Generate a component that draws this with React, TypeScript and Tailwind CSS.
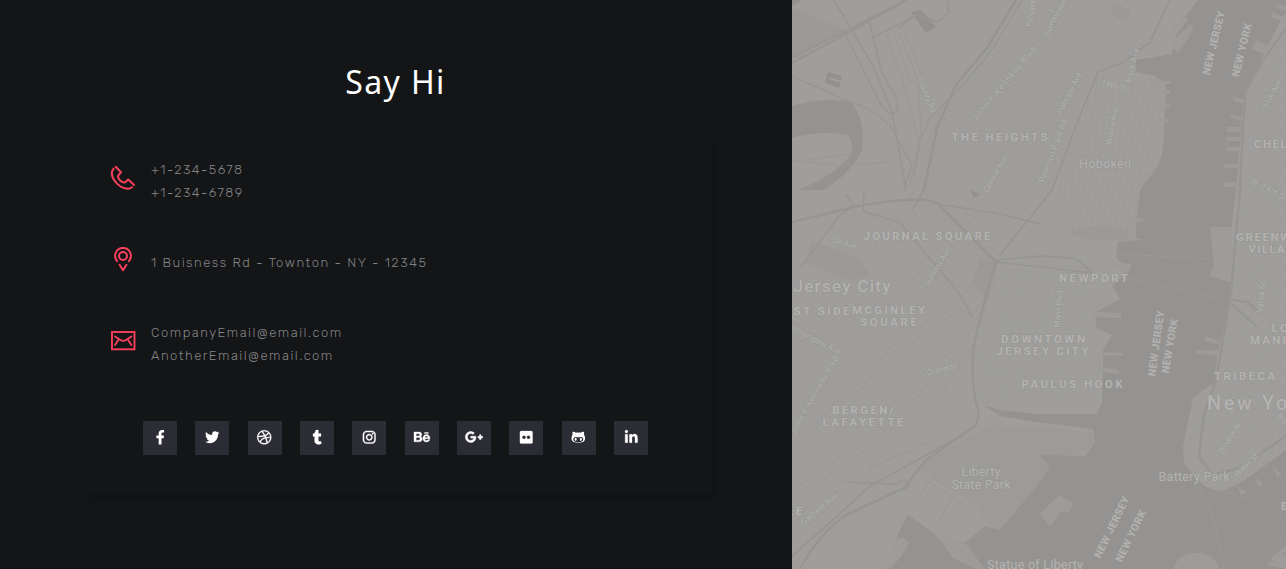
import type { ReactNode } from "react";
import {
  FaBehance,
  FaDribbble,
  FaFacebookF,
  FaFlickr,
  FaGithubAlt,
  FaGooglePlusG,
  FaInstagram,
  FaLinkedinIn,
  FaTumblr,
  FaTwitter,
} from "react-icons/fa";

function PhoneIcon() {
  return (
    <svg width="26" height="26" viewBox="0 0 26 26" fill="none" stroke="#f9405c" strokeWidth="2" strokeLinecap="round" strokeLinejoin="round">
      <path d="M5.8 1.8 L11 7.3 L8.4 10.3 C7.2 12.8 8.7 14 10.2 15.5 C12 17.2 13.4 18.3 15.5 17.1 L18.2 14.6 L24.1 20" />
      <path d="M3.6 3.6 C1.2 6.5 1.6 10.9 3.8 14.6 C7.2 20.4 13.5 24.2 18.6 23.7 C20.3 23.5 21.3 23 22.2 22.3" />
    </svg>
  );
}

function PinIcon() {
  return (
    <svg width="26" height="26" viewBox="0 0 26 26" fill="none" stroke="#f9405c" strokeWidth="2" strokeLinecap="round" strokeLinejoin="round">
      <circle cx="13" cy="10" r="4" />
      <path d="M7.1 15.2 C2.7 9.7 6 2 13 2 C20 2 23.3 9.7 18.9 15.2" />
      <path d="M9.6 18.8 L13 24.2 L16.4 18.8" />
    </svg>
  );
}

function MailIcon() {
  return (
    <svg width="26" height="26" viewBox="0 0 26 26" fill="none" stroke="#f9405c" strokeWidth="1.9" strokeLinecap="round">
      <rect x="2" y="5" width="22.5" height="17.3" />
      <path d="M5 9.5 L10.4 13 C12.3 14.2 14.2 14.2 16 13 L21.4 9.5" />
      <path d="M8.3 13 L5 18 M18.1 13 L21.4 18" />
    </svg>
  );
}

function ContactRow({ icon, children, className }: { icon: ReactNode; children: ReactNode; className: string }) {
  return (
    <div className={`flex gap-[15px] ${className}`}>
      <div className="shrink-0">{icon}</div>
      <div className="whitespace-nowrap font-['Rubik','Inter',sans-serif] text-[13px] font-light leading-[23px] text-[#838485]">
        {children}
      </div>
    </div>
  );
}

const socials = [
  { name: "Facebook", Icon: FaFacebookF, size: 14.5, bold: 0 },
  { name: "Twitter", Icon: FaTwitter, size: 14.5, bold: 0 },
  { name: "Dribbble", Icon: FaDribbble, size: 14.5, bold: 12 },
  { name: "Tumblr", Icon: FaTumblr, size: 14.5, bold: 8 },
  { name: "Instagram", Icon: FaInstagram, size: 14.5, bold: 14 },
  { name: "Behance", Icon: FaBehance, size: 16, bold: 12 },
  { name: "Google Plus", Icon: FaGooglePlusG, size: 18, bold: 16 },
  { name: "Flickr", Icon: FaFlickr, size: 14.5, bold: 8 },
  { name: "GitHub", Icon: FaGithubAlt, size: 14.5, bold: 0 },
  { name: "LinkedIn", Icon: FaLinkedinIn, size: 14.5, bold: 8 },
];

type Label = { t: string; x: number; y: number; s: number; w: number; r?: number; b?: boolean };

// x and y give the centre of the label, w its drawn width.
const labels: Label[] = [
  { t: "THE HEIGHTS", x: 999.5, y: 137, s: 11.5, w: 96, b: true },
  { t: "Hoboken", x: 1105, y: 163, s: 12.5, w: 52 },
  { t: "CHELSEA", x: 1283, y: 144, s: 11.5, w: 58, b: true },
  { t: "JOURNAL SQUARE", x: 927, y: 236, s: 11.5, w: 127, b: true },
  { t: "NEWPORT", x: 1093.5, y: 278, s: 11.5, w: 69, b: true },
  { t: "Jersey City", x: 842, y: 285.5, s: 17, w: 97 },
  { t: "ST SIDE", x: 821.5, y: 311, s: 11.5, w: 56, b: true },
  { t: "MCGINLEY", x: 888.5, y: 310, s: 11.5, w: 73, b: true },
  { t: "SQUARE", x: 888.5, y: 322, s: 11.5, w: 57, b: true },
  { t: "DOWNTOWN", x: 1043, y: 339, s: 11.5, w: 84, b: true },
  { t: "JERSEY CITY", x: 1042.5, y: 351, s: 11.5, w: 92, b: true },
  { t: "PAULUS HOOK", x: 1072, y: 384, s: 11.5, w: 101, b: true },
  { t: "BERGEN/", x: 863, y: 410, s: 11.5, w: 62, b: true },
  { t: "LAFAYETTE", x: 863, y: 422, s: 11.5, w: 81, b: true },
  { t: "GREENWICH", x: 1275, y: 237, s: 11.5, w: 78, b: true },
  { t: "VILLAGE", x: 1275, y: 249, s: 11.5, w: 53, b: true },
  { t: "LOWER", x: 1295, y: 328, s: 11.5, w: 47, b: true },
  { t: "MANHATTAN", x: 1294, y: 340, s: 11.5, w: 88, b: true },
  { t: "TRIBECA", x: 1244.5, y: 376, s: 11.5, w: 61, b: true },
  { t: "New York", x: 1258.5, y: 403, s: 20, w: 103 },
  { t: "Liberty", x: 981, y: 471, s: 12.5, w: 39 },
  { t: "State Park", x: 981, y: 484, s: 12.5, w: 59 },
  { t: "Battery Park", x: 1194, y: 476, s: 12.5, w: 71 },
  { t: "Statue of Liberty", x: 1035, y: 564, s: 12.5, w: 96 },
  { t: "NEW JERSEY", x: 1213.5, y: 43, s: 10.5, w: 65, r: -76, b: true },
  { t: "NEW YORK", x: 1241.5, y: 50, s: 10.5, w: 55, r: -76, b: true },
  { t: "NEW JERSEY", x: 1156, y: 343.5, s: 10.5, w: 66, r: -82, b: true },
  { t: "NEW YORK", x: 1169.5, y: 346, s: 10.5, w: 55, r: -80, b: true },
  { t: "NEW JERSEY", x: 1111.5, y: 527, s: 10.5, w: 67, r: -64, b: true },
  { t: "NEW YORK", x: 1130.5, y: 536, s: 10.5, w: 56, r: -64, b: true },
  { t: "BROOKLYN", x: 1317, y: 506, s: 11.5, w: 72, b: true },
  { t: "LE", x: 795, y: 511, s: 11.5, w: 15, b: true },
  { t: "County Rd", x: 927, y: 95, s: 8.5, w: 37, r: 68 },
  { t: "John F Kennedy Blvd", x: 1004, y: 83, s: 8.5, w: 93, r: -50 },
  { t: "Summit Ave", x: 1055, y: 17, s: 8.5, w: 41, r: -62 },
  { t: "Paterson Plank Rd", x: 1053, y: 151, s: 8.5, w: 66, r: -69 },
  { t: "Palisade Ave", x: 1069, y: 93, s: 8.5, w: 45, r: -63 },
  { t: "Central Ave", x: 995, y: 174, s: 8.5, w: 41, r: -60 },
  { t: "Park Ave", x: 1132, y: 65, s: 8.5, w: 35, r: -77 },
  { t: "Willow Ave", x: 1112, y: 126, s: 8.5, w: 38, r: -79 },
  { t: "14th St", x: 1114, y: 85, s: 8.5, w: 26, r: 10 },
  { t: "Palisade Ave", x: 1032, y: 6, s: 8.5, w: 42, r: -80 },
  { t: "11th Ave", x: 1272, y: 94, s: 8.5, w: 31, r: -61 },
  { t: "W. 14th St", x: 1269, y: 189, s: 8.5, w: 39, r: 28 },
  { t: "5th Ave", x: 844, y: 243, s: 8.5, w: 26, r: 17 },
  { t: "Summit Ave", x: 937, y: 267, s: 8.5, w: 43, r: -59 },
  { t: "Marin Blvd", x: 1058, y: 309, s: 8.5, w: 37, r: -86 },
  { t: "Varick St", x: 1261, y: 297, s: 8.5, w: 31, r: -83 },
  { t: "Communipaw Ave", x: 811, y: 337, s: 8.5, w: 66, r: 27 },
  { t: "Grand St", x: 942, y: 369, s: 8.5, w: 31, r: -13 },
  { t: "John F Kennedy Blvd", x: 814, y: 395, s: 8.5, w: 88, r: -61 },
  { t: "Garfield Ave", x: 819, y: 509, s: 8.5, w: 45, r: -40 },
  { t: "Broadway", x: 1229, y: 438, s: 8.5, w: 35, r: -60 },
  { t: "Water St", x: 1246, y: 465, s: 8.5, w: 30, r: -43 },
  { t: "Bowery", x: 1289, y: 427, s: 8.5, w: 32, r: 52 },
];

function CityMap() {
  return (
    <svg width="494" height="569" viewBox="792 0 494 569" className="block h-full w-full" role="img">
      <defs>
        <pattern id="grid-hoboken" width="6" height="11" patternUnits="userSpaceOnUse" patternTransform="rotate(7)">
          <path d="M0 0H6M0 0V11" stroke="#989795" strokeWidth="1.1" />
        </pattern>
        <pattern id="grid-heights" width="5" height="14" patternUnits="userSpaceOnUse" patternTransform="rotate(121)">
          <path d="M0 0H5M0 0V14" stroke="#979694" strokeWidth="1" />
        </pattern>
        <pattern id="grid-bergen" width="6" height="17" patternUnits="userSpaceOnUse" patternTransform="rotate(-57)">
          <path d="M0 0H6M0 0V17" stroke="#979694" strokeWidth="1" />
        </pattern>
        <pattern id="grid-downtown" width="9" height="7" patternUnits="userSpaceOnUse" patternTransform="rotate(3)">
          <path d="M0 0H9M0 0V7" stroke="#989795" strokeWidth="1" />
        </pattern>
        <pattern id="grid-manhattan" width="7" height="13" patternUnits="userSpaceOnUse" patternTransform="rotate(29)">
          <path d="M0 0H7M0 0V13" stroke="#989795" strokeWidth="1" />
        </pattern>
      </defs>

      <rect x="792" width="494" height="569" fill="#9f9e9c" />

      <g fill="#9b9a98">
        <path d="M792 8L818 18L846 30L792 61Z" />
        <path d="M812 240L858 258L871 276L847 280L804 263Z" />
        <path d="M960 442L990 425L1036 427L1093 432L1094 444L1050 467L1036 487L1000 530L982 520L976 505L918 470L924 461Z" fill="#9c9b99" />
        <path d="M1113 3L1130 10L1127 22L1112 15Z" />
        <path d="M1070 232Q1086 221 1130 230L1126 240Q1086 243 1070 232Z" />
        <path d="M980 258L998 264L988 300L972 285Z" />
      </g>

      <path d="M1042 0H1162L1140 58L1120 62L1090 72L1052 190L1000 225L905 205L930 120Z" fill="url(#grid-heights)" opacity=".72" />
      <path d="M1098 72L1165 78L1158 170L1134 242L1055 235L1060 170Z" fill="url(#grid-hoboken)" opacity=".85" />
      <path d="M850 210L990 210L1000 262L970 360L910 440L868 475L792 540V320L860 280Z" fill="url(#grid-bergen)" opacity=".8" />
      <path d="M998 258L1116 248L1092 290L1102 372L1100 405L976 403L975 345Z" fill="url(#grid-downtown)" opacity=".75" />
      <path d="M1286 30L1252 100L1242 190L1232 300L1214 390L1190 425L1186 460L1222 490L1286 448Z" fill="url(#grid-manhattan)" opacity=".8" />

      <g fill="#949391">
        <path d="M792 106Q830 96 852 103Q866 122 862 150Q852 172 824 190H797Q833 177 850 156Q855 145 848 135Q820 130 792 138Z" />
        <path d="M1198 0H1286V12Q1268 42 1254 76Q1241 98 1241 132L1236 190L1230 240V300L1218 352L1214 382L1193 398L1183 446L1184 464L1204 486L1220 492L1242 482L1286 450V569H885L895 548L898 533L908 515L932 532L952 552L968 540L985 526L1000 530L1015 512L1036 487L1050 467L1040 455L1085 456L1095 443L1093 429L1036 422L1000 416L984 405L1000 410L1036 414L1097 414L1102 402L1103 370V350L1112 335L1096 328V312L1120 299L1112 286L1130 270L1116 258L1118 242L1136 240L1136 220L1140 190L1158 166L1163 150L1166 85L1156 76L1136 72V60L1156 57L1172 54L1178 26Z" />
      </g>

      <g fill="#9d9c9a">
        <path d="M1170 44L1190 24L1194 29L1178 54ZM1177 34L1172 30L1184 15L1188 19Z" />
        <path d="M1113 262L1131 264L1130 271L1113 269ZM1093 304L1106 301V306L1093 309ZM1093 312L1121 313V318L1093 317ZM1100 352L1123 353V356L1100 355ZM1100 367L1119 370V374L1100 372ZM1125 219L1147 218L1142 222L1125 224ZM1126 236L1144 240L1126 241Z" />
        <path d="M1152 80L1171 81V84H1152ZM1152 91L1170 91V94H1152ZM1152 103L1171 104V107H1152ZM1152 118L1168 119V122H1152Z" />
        <path d="M1227 127H1243V132H1227ZM1226 137H1243V141H1226ZM1226 147H1243V151H1226ZM1224 164H1242V168H1224ZM1224 182H1240V187H1224ZM1233 96L1244 100V104L1233 101ZM1231 114L1243 118V122L1231 118Z" />
        <path d="M1210 227H1232V283L1209 276L1214 265ZM1212 244H1232V248H1212ZM1206 336L1219 341V345L1204 340ZM1197 350L1218 350V355L1197 354Z" />
        <path d="M1256 40L1268 45L1264 54L1252 49ZM1272 12L1286 18V22L1271 17ZM1277 4L1286 7V11L1276 8Z" />
        <path d="M1040 514L1059 495L1073 503L1069 513L1061 511L1050 527Z" />
        <path d="M1173 569Q1178 553 1197 553Q1213 553 1220 569ZM1266 565L1286 553V569ZM1270 558L1286 546V551L1274 561Z" />
        <path d="M885 569L895 543Q902 533 909 543Q904 555 890 569ZM936 536L944 545L953 558L976 569L985 569L967 545L950 536Z" />
        <path d="M1238 487L1247 492L1241 496ZM1255 476L1263 485L1259 487ZM1272 464L1281 475L1277 477Z" />
      </g>

      <g fill="#929190">
        <path d="M828 72L842 76L839 88L825 83ZM911 12L921 10L936 27L926 33Z" />
        <path d="M792 0H802L792 6ZM970 190L980 194L974 198Z" />
      </g>
      <path d="M829 78L842 82" stroke="#a3a2a0" strokeWidth="1.4" />

      <g fill="none" stroke="#969593" strokeWidth="2" strokeLinecap="round" strokeLinejoin="round">
        <path d="M792 57L840 34L906 0" />
        <path d="M792 63L846 34L902 3" />
        <path d="M834 0L872 64L892 112L906 190" strokeWidth="1.5" />
        <path d="M868 15L881 70L896 98Q902 113 890 114L880 103L846 36" strokeWidth="1.5" />
        <path d="M1016 0L987 48L956 85L937 128L924 190" strokeWidth="2.5" />
        <path d="M1022 0L992 50L962 86L930 118L920 140L914 176" strokeWidth="1.2" />
        <path d="M792 222L858 206Q925 194 938 204L996 262Q984 300 974 345Q970 370 976 403Q982 417 974 427L925 461L904 488L848 514Q820 532 800 569" strokeWidth="2.5" />
        <path d="M792 556L834 519L870 486L932 452L975 427" strokeWidth="1.7" />
        <path d="M996 260L1040 256L1075 258L1092 272" strokeWidth="1.7" />
        <path d="M996 262L1040 267L1092 273" strokeWidth="1.5" />
        <path d="M846 194L854 206L840 215L800 268M864 190L863 211L900 223L958 292L972 316" strokeWidth="1.5" />
        <path d="M792 76L848 101Q878 110 892 129L912 165L904 190" strokeWidth="1.3" />
        <path d="M898 28L917 15L938 22L949 12L947 0M872 38L914 16" strokeWidth="1.5" />
        <path d="M1170 0L1150 42L1124 62L1098 72L1079 118L1052 190L1000 255" strokeWidth="1.8" />
        <path d="M1286 28L1262 62L1246 91L1243 126L1240 190L1231 292L1216 380L1204 415L1199 456L1212 475L1240 468L1286 436" strokeWidth="2.5" />
        <path d="M846 482L895 484L905 479L910 487L898 491" strokeWidth="1.3" />
        <path d="M1232 300L1248 302L1258 312M1232 304L1256 326" />
        <path d="M924 190L912 210M938 204L1000 214L1040 224" strokeWidth="1.5" />
      </g>
      <g fill="none" stroke="#999896" strokeWidth="1">
        <path d="M887 36L903 80L919 142L909 190M899 32L918 80L921 130L914 176M895 35L910 82M904 33L922 75" />
        <path d="M980 22L992 42M805 160L850 154M930 442L870 468M792 160L840 166L890 162" />
        <path d="M920 476L974 511M936 472L920 496M960 482L940 520" />
      </g>
      <g fill="none" stroke="#9a9997" strokeWidth="1">
        <path d="M1118 254L1230 260M1120 277L1163 286L1232 301M1200 486L1214 522L1224 569M1215 490L1240 520L1286 544M1220 490L1250 500L1286 514" />
      </g>

      <g fontFamily="Roboto, sans-serif" textAnchor="middle" stroke="#979694" strokeWidth="1.2" paintOrder="stroke" strokeLinejoin="round">
        {labels.map((l, i) => (
          <text
            key={i}
            x={l.x}
            y={l.y + l.s * 0.36}
            fontSize={l.s}
            fontWeight={l.b ? 700 : l.s > 15 ? 500 : 400}
            fill="#b3b2b0"
            textLength={l.w}
            lengthAdjust="spacing"
            transform={l.r ? `rotate(${l.r} ${l.x} ${l.y})` : undefined}
          >
            {l.t}
          </text>
        ))}
      </g>
    </svg>
  );
}

export default function App() {
  return (
    <main className="flex h-[569px] w-full overflow-hidden bg-[#141517]">
      <section className="flex w-[792px] shrink-0 flex-col border-b-2 border-[#111213] pl-[79px]">
        <h1 className="mt-[60px] w-[633px] text-center font-['Noto_Sans','Open_Sans',sans-serif] text-[32px] leading-[44px] tracking-[1.4px] text-white">
          Say Hi
        </h1>
        <div className="mt-[32px] h-[358px] w-[633px] pl-[31px] pt-[22px] shadow-[5px_5px_6px_-1px_rgba(0,0,0,0.16)]">
          <ContactRow icon={<div className="pt-[7px]"><PhoneIcon /></div>} className="h-[93px]">
            <p className="tracking-[1.47px]">+1-234-5678</p>
            <p className="tracking-[1.47px]">+1-234-6789</p>
          </ContactRow>
          <ContactRow icon={<div className="-mt-[5px]"><PinIcon /></div>} className="h-[70px]">
            <p className="tracking-[1.52px]">1 Buisness Rd - Townton - NY - 12345</p>
          </ContactRow>
          <ContactRow icon={<div className="pt-[6px]"><MailIcon /></div>} className="h-[100px]">
            <p className="tracking-[1.5px]">CompanyEmail@email.com</p>
            <p className="tracking-[1.5px]">AnotherEmail@email.com</p>
          </ContactRow>
          <nav className="ml-[33px] flex w-[505px] justify-between">
            {socials.map(({ name, Icon, size, bold }) => (
              <a key={name} aria-label={name} className="flex size-[34px] items-center justify-center bg-[#2b2c34] pb-[2px] text-white">
                <Icon size={size} strokeWidth={bold} className="shrink-0 overflow-visible" />
              </a>
            ))}
          </nav>
        </div>
      </section>
      <aside className="min-w-0 flex-1 bg-[#9f9e9c]">
        <CityMap />
      </aside>
    </main>
  );
}
